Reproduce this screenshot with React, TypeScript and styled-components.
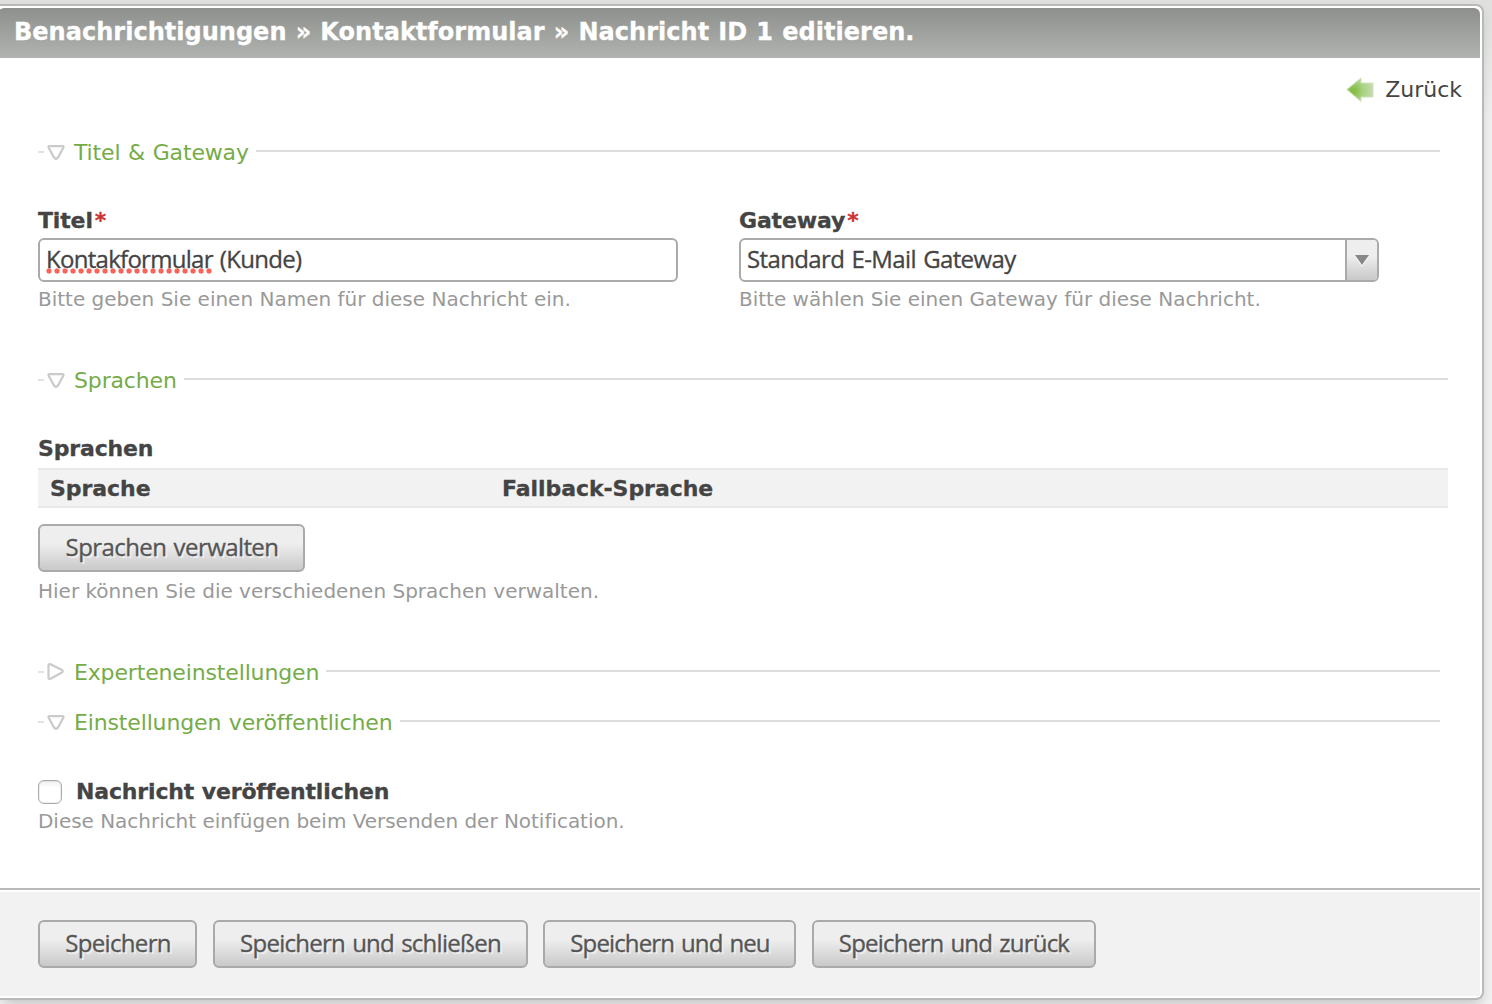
import React from "react";
import styled, { createGlobalStyle } from "styled-components";

const verdana = `Verdana, "DejaVu Sans", sans-serif`;
const trebuchet = `"Trebuchet MS", "Open Sans", sans-serif`;

const GlobalStyle = createGlobalStyle`
  *, *::before, *::after { box-sizing: border-box; }
  html { height: 100%; overflow: hidden; background: linear-gradient(#dfe0de 0, #f2f2f2 120px); }
  body { margin: 0; font: 22px/30px ${verdana}; color: #444; }
`;

const Page = styled.div`
  height: 1004px;
  padding-top: 4px;
  overflow: hidden;
`;

const Panel = styled.main`
  display: flex;
  flex-direction: column;
  width: 1484px;
  height: 996px;
  padding: 2px 2px 2px 0;
  border: 2px solid #b9b9b9;
  border-left: 0;
  border-radius: 0 8px 8px 0;
  background: #fff;
  box-shadow: 0 7px 14px -3px rgba(0, 0, 0, 0.2);
`;

const TitleBar = styled.header`
  height: 50px;
  margin-left: -2px;
  padding: 0 0 4px 16px;
  border-radius: 6px 6px 0 0;
  background: linear-gradient(#8e908d, #b1b3b0);
`;

const Title = styled.h1`
  margin: 0;
  font-size: 24px;
  line-height: 48px;
  font-weight: bold;
  letter-spacing: 0.02px;
  word-spacing: 0.8px;
  -webkit-text-stroke: 0.3px;
  color: #fff;
  white-space: nowrap;
`;

const BackRow = styled.nav`
  display: flex;
  justify-content: flex-end;
  align-items: center;
  height: 64px;
  padding-right: 18px;
`;

const BackLink = styled.a`
  display: flex;
  align-items: center;
  gap: 11px;
  line-height: 32px;
`;

const Form = styled.form`
  display: flex;
  flex-direction: column;
  flex: 1;
  padding-left: 38px;
`;

const Legend = styled.div<{ $top: number; $wide?: boolean }>`
  display: flex;
  align-items: center;
  height: 30px;
  width: ${(p) => (p.$wide ? 1410 : 1402)}px;
  margin-top: ${(p) => p.$top}px;
  color: #75ac48;
  white-space: nowrap;

  &::after {
    content: "";
    flex: 1;
    height: 2px;
    margin: 0 0 2px 7px;
    background: #ddd;
  }
`;

const LegendText = styled.span`
  margin-left: 8px;
  padding-top: 1px;
  letter-spacing: -0.15px;
  word-spacing: 0.8px;
`;

const Columns = styled.div`
  display: grid;
  grid-template-columns: 640px 640px;
  column-gap: 61px;
  margin-top: 37px;
`;

const Label = styled.label<{ $top?: number }>`
  display: block;
  height: 32px;
  margin-top: ${(p) => p.$top ?? 0}px;
  line-height: 33px;
  font-weight: bold;
  letter-spacing: -0.15px;
  -webkit-text-stroke: 0.3px;
`;

const Required = styled.span`
  margin-left: 2px;
  color: #cc3333;
`;

const Field = styled.div`
  display: flex;
  height: 44px;
  margin-top: 2px;
  border: 2px solid #aaa;
  border-radius: 6px;
  overflow: hidden;
  background: #fff;
  font: 24px/38px ${trebuchet};
`;

const FieldText = styled.span<{ $track: number }>`
  flex: 1;
  padding-left: 6px;
  letter-spacing: ${(p) => p.$track}px;
  word-spacing: 1.6px;
  -webkit-text-stroke: 0.3px;
`;

const Misspelled = styled.span`
  background: radial-gradient(circle at 3px 3px, #fa6359 2.1px, transparent 3.1px) 0 calc(100% - 1px) / 8px 6px repeat-x;
`;

const DropButton = styled.span`
  display: flex;
  align-items: center;
  justify-content: center;
  width: 32px;
  padding-top: 2px;
  border-left: 2px solid #aaa;
  background: linear-gradient(#eee 40%, #c9c9c9);
`;

const Hint = styled.p<{ $top: number; $track?: number }>`
  height: 28px;
  margin: ${(p) => p.$top}px 0 0;
  font-size: 20px;
  line-height: 28px;
  letter-spacing: ${(p) => p.$track ?? 0}px;
  color: #999;
  white-space: nowrap;
`;

const TableHead = styled.div`
  display: grid;
  grid-template-columns: 452px 1fr;
  width: 1410px;
  height: 40px;
  margin-top: 4px;
  padding-left: 12px;
  border: solid #e8e8e8;
  border-width: 2px 0;
  background: #f2f2f2;
  line-height: 37px;
  font-weight: bold;
  letter-spacing: -0.05px;
  -webkit-text-stroke: 0.3px;
`;

const Button = styled.button<{ $width: number; $track: number }>`
  width: ${(p) => p.$width}px;
  height: 48px;
  padding: 0 0 2px 1px;
  border: 2px solid #aaa;
  border-radius: 6px;
  background: linear-gradient(#eee 40%, #c9c9c9);
  color: #555;
  font: 24px/40px ${trebuchet};
  letter-spacing: ${(p) => p.$track}px;
  word-spacing: 1.6px;
  -webkit-text-stroke: 0.3px;
  text-shadow: 2px 2px 0 #eee;
  white-space: nowrap;
`;

const ManageRow = styled.div`
  display: flex;
  margin-top: 16px;
`;

const CheckRow = styled.label`
  display: flex;
  align-items: center;
  gap: 14px;
  height: 30px;
  margin-top: 40px;
  line-height: 32px;
  font-weight: bold;
  letter-spacing: -0.15px;
  -webkit-text-stroke: 0.3px;
`;

const CheckBox = styled.span`
  width: 24px;
  height: 24px;
  border: 1px solid #aaa;
  border-radius: 6px;
  background: linear-gradient(#f0f0f0, #fff 30%);
  box-shadow: inset 0 0 0 1px rgba(0, 0, 0, 0.06);
`;

const Footer = styled.footer`
  display: flex;
  gap: 15.5px;
  height: 108px;
  padding: 30px 0 0 38px;
  border-top: 2px solid #b9b9b9;
  background: linear-gradient(#fff 2px, #f2f2f2 2px);
`;

function Toggle({ open }: { open: boolean }) {
  return (
    <svg width="28" height="24" viewBox="0 0 28 24" fill="none">
      <path d="M0 12h6" stroke="#e2e2e2" strokeWidth="2" />
      <path
        d={
          open
            ? "M11.500 6.200H24.500Q26 6.200 25.300 7.800L20 17.500Q18 20 16 17.500L10.700 7.800Q10 6.200 11.500 6.200Z"
            : "M10.500 5.500Q10.500 3.500 12.500 4.300L23.500 9.800Q26 11.200 23.500 12.800L12.500 18.700Q10.500 19.500 10.500 17.500Z"
        }
        stroke="#cbcbcb"
        strokeWidth="2.3"
        strokeLinejoin="round"
      />
    </svg>
  );
}

function BackArrow() {
  return (
    <svg width="28" height="26" viewBox="0 0 28 26">
      <defs>
        <radialGradient id="arrow" gradientUnits="userSpaceOnUse" cx="7" cy="14" r="20">
          <stop offset="0.1" stopColor="#86be46" />
          <stop offset="0.5" stopColor="#a8d182" />
          <stop offset="1" stopColor="#c5dcae" />
        </radialGradient>
      </defs>
      <path d="M0.800 12.500L15 1V6H27V20H15V24.500Z" fill="url(#arrow)" stroke="#cfe2bd" strokeWidth="1" />
    </svg>
  );
}

export default function App() {
  return (
    <Page>
      <GlobalStyle />
      <Panel>
        <TitleBar>
          <Title>Benachrichtigungen » Kontaktformular » Nachricht ID 1 editieren.</Title>
        </TitleBar>
        <BackRow>
          <BackLink>
            <BackArrow />
            Zurück
          </BackLink>
        </BackRow>
        <Form>
          <Legend $top={15}>
            <Toggle open />
            <LegendText>Titel &amp; Gateway</LegendText>
          </Legend>
          <Columns>
            <div>
              <Label>
                Titel<Required>*</Required>
              </Label>
              <Field>
                <FieldText $track={-0.72}>
                  <Misspelled>Kontakformular</Misspelled> (Kunde)
                </FieldText>
              </Field>
              <Hint $top={3}>Bitte geben Sie einen Namen für diese Nachricht ein.</Hint>
            </div>
            <div>
              <Label>
                Gateway<Required>*</Required>
              </Label>
              <Field>
                <FieldText $track={-0.62}>Standard E-Mail Gateway</FieldText>
                <DropButton>
                  <svg width="14" height="12" viewBox="0 0 14 12">
                    <path d="M0 2h14L7 12z" fill="#f7f7f7" />
                    <path d="M0 0h14L7 10z" fill="#888" />
                  </svg>
                </DropButton>
              </Field>
              <Hint $top={3}>Bitte wählen Sie einen Gateway für diese Nachricht.</Hint>
            </div>
          </Columns>
          <Legend $top={52} $wide>
            <Toggle open />
            <LegendText>Sprachen</LegendText>
          </Legend>
          <Label $top={37}>Sprachen</Label>
          <TableHead>
            <span>Sprache</span>
            <span>Fallback-Sprache</span>
          </TableHead>
          <ManageRow>
            <Button type="button" $width={267} $track={-0.58}>Sprachen verwalten</Button>
          </ManageRow>
          <Hint $top={5}>Hier können Sie die verschiedenen Sprachen verwalten.</Hint>
          <Legend $top={52}>
            <Toggle open={false} />
            <LegendText>Experteneinstellungen</LegendText>
          </Legend>
          <Legend $top={20}>
            <Toggle open />
            <LegendText>Einstellungen veröffentlichen</LegendText>
          </Legend>
          <CheckRow>
            <CheckBox />
            Nachricht veröffentlichen
          </CheckRow>
          <Hint $top={0} $track={-0.03}>Diese Nachricht einfügen beim Versenden der Notification.</Hint>
        </Form>
        <Footer>
          <Button $width={159} $track={-0.65}>Speichern</Button>
          <Button $width={315} $track={-0.74}>Speichern und schließen</Button>
          <Button $width={253} $track={-0.88}>Speichern und neu</Button>
          <Button $width={284} $track={-0.78}>Speichern und zurück</Button>
        </Footer>
      </Panel>
    </Page>
  );
}
